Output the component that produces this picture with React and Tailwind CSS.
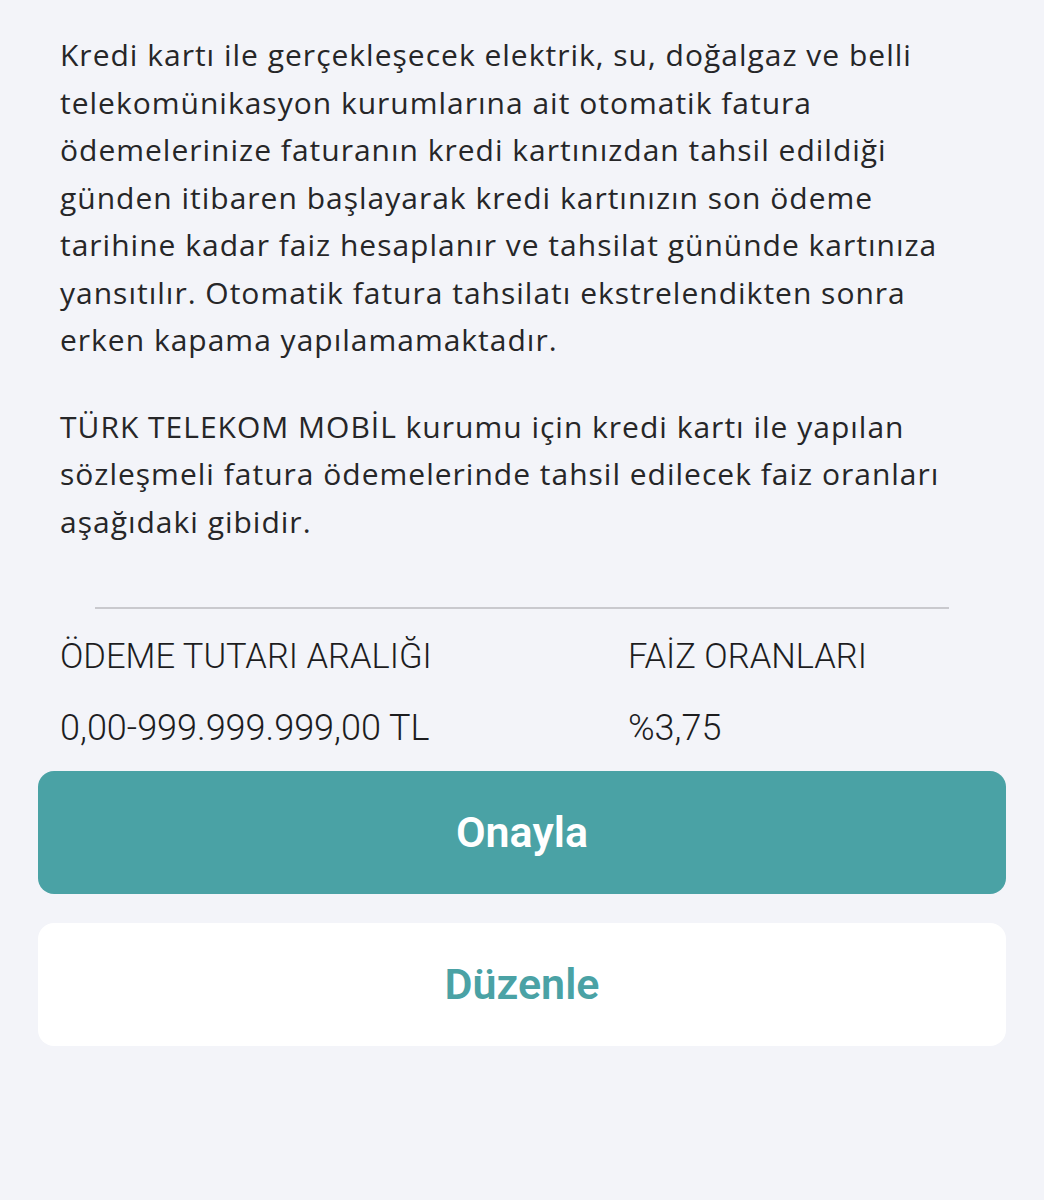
export default function App() {
  const para1 = [
    "Kredi kartı ile gerçekleşecek elektrik, su, doğalgaz ve belli",
    "telekomünikasyon kurumlarına ait otomatik fatura",
    "ödemelerinize faturanın kredi kartınızdan tahsil edildiği",
    "günden itibaren başlayarak kredi kartınızın son ödeme",
    "tarihine kadar faiz hesaplanır ve tahsilat gününde kartınıza",
    "yansıtılır. Otomatik fatura tahsilatı ekstrelendikten sonra",
    "erken kapama yapılamamaktadır.",
  ];
  const para2 = [
    "TÜRK TELEKOM MOBİL kurumu için kredi kartı ile yapılan",
    "sözleşmeli fatura ödemelerinde tahsil edilecek faiz oranları",
    "aşağıdaki gibidir.",
  ];

  return (
    <div
      className="min-h-[1200px] w-full bg-[#f3f4f9] text-[#1d1d1f]"
      style={{ fontFamily: "Roboto, 'Noto Sans', sans-serif" }}
    >
      <div
        className="px-[60px] pt-[31px] font-normal tracking-[1px] text-[#262628]"
        style={{ fontFamily: "'Open Sans', 'Noto Sans', sans-serif" }}
      >
        <div className="text-[30px] leading-[47.5px]">
          {para1.map((l) => (
            <div key={l} className="whitespace-nowrap">{l}</div>
          ))}
        </div>
        <div className="mt-[39px] text-[30px] leading-[47.5px]">
          {para2.map((l) => (
            <div key={l} className="whitespace-nowrap">{l}</div>
          ))}
        </div>
      </div>

      <div className="mx-[95px] mt-[62px] h-[2px] bg-[#c9c9ce]" />

      <div className="px-[60px] pt-[24px] font-light">
        <div className="flex h-[48px] items-center text-[34.5px]">
          <div className="w-[568px]">ÖDEME TUTARI ARALIĞI</div>
          <div>FAİZ ORANLARI</div>
        </div>
        <div className="mt-[23px] flex h-[48px] items-center text-[36px]">
          <div className="w-[568px]">0,00-999.999.999,00 TL</div>
          <div>%3,75</div>
        </div>
      </div>

      <div className="mt-[19px] flex flex-col gap-[29px] px-[38px]">
        <button className="flex h-[123px] w-full items-center justify-center rounded-[16px] bg-[#4aa2a5] text-[43px] font-semibold text-white">
          Onayla
        </button>
        <button className="flex h-[123px] w-full items-center justify-center rounded-[16px] bg-white text-[43px] font-semibold text-[#4aa2a5]">
          Düzenle
        </button>
      </div>
    </div>
  );
}
